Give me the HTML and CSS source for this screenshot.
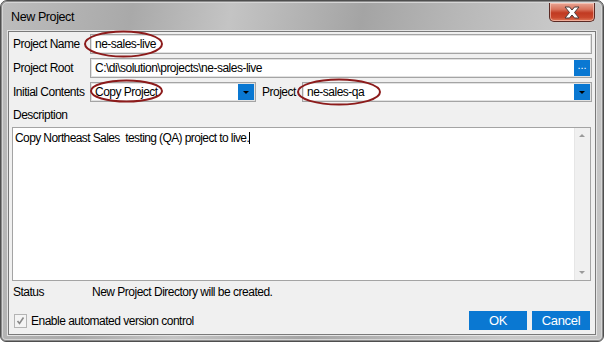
FILE: index.html
```html
<!DOCTYPE html>
<html>
<head>
<meta charset="utf-8">
<link rel="stylesheet" href="styles.css">
</head>
<body>
<div class="window">
  <div class="titlebar">
    <span class="title">New Project</span>
    <div class="close">
      <svg width="18" height="13" viewBox="0 0 18 13">
        <path d="M2 1 H6.5 L9 4 L11.5 1 H16 L11.5 6.5 L16 12 H11.5 L9 9 L6.5 12 H2 L6.5 6.5 Z" fill="#fff" stroke="#4a3a3a" stroke-width="1"/>
      </svg>
    </div>
  </div>
  <div class="client">
    <div class="row">
      <span class="lbl">Project Name</span>
      <div class="field">ne-sales-live</div>
    </div>
    <div class="row">
      <span class="lbl">Project Root</span>
      <div class="field"><span class="grow">C:\di\solution\projects\ne-sales-live</span><span class="browse">...</span></div>
    </div>
    <div class="row">
      <span class="lbl">Initial Contents</span>
      <div class="field combo1"><span class="grow">Copy Project</span><span class="drop"></span></div>
      <span class="lbl2">Project</span>
      <div class="field combo2"><span class="grow">ne-sales-qa</span><span class="drop"></span></div>
    </div>
    <div class="desc-label">Description</div>
    <div class="textarea">
      <div class="text">Copy Northeast Sales&nbsp; testing (QA) project to live.<span class="caret"></span></div>
      <div class="scrollbar">
        <span class="arr up"></span>
        <span class="arr down"></span>
      </div>
    </div>
    <div class="status">
      <span class="slbl">Status</span>
      <span>New Project Directory will be created.</span>
    </div>
    <div class="bottom">
      <div class="check">
        <span class="box">
          <svg width="11" height="11" viewBox="0 0 11 11"><path d="M2.5 6 L4.5 8.5 L8.5 2.5" fill="none" stroke="#8a8a8a" stroke-width="1.6"/></svg>
        </span>
        <span>Enable automated version control</span>
      </div>
      <div class="buttons">
        <div class="btn">OK</div>
        <div class="btn">Cancel</div>
      </div>
    </div>
  </div>
  <svg class="annot" width="604" height="342" viewBox="0 0 604 342">
    <ellipse cx="123.5" cy="44" rx="38.5" ry="12.5" fill="none" stroke="#8c1b1b" stroke-width="2"/>
    <ellipse cx="126.5" cy="91" rx="35.5" ry="10.5" fill="none" stroke="#8c1b1b" stroke-width="2"/>
    <ellipse cx="339" cy="92" rx="41" ry="12.5" fill="none" stroke="#8c1b1b" stroke-width="2"/>
  </svg>
</div>
</body>
</html>
```
FILE: styles.css
```css
* { box-sizing: border-box; }
html, body { margin: 0; padding: 0; background: #ffffff; }
body {
  font-family: "Liberation Sans", Arial, sans-serif;
  font-size: 12px;
  letter-spacing: -0.5px;
  color: #000;
}
.window {
  position: relative;
  width: 604px;
  height: 342px;
  border: 1px solid #4e4e4e;
  border-radius: 7px 7px 6px 6px;
  padding: 0 7px 6px 7px;
  background: linear-gradient(100deg, #bdbdbd 0%, #a9a9a9 20%, #c4c4c4 35%, #a4a4a4 55%, #b8b8b8 70%, #c9c9c9 85%, #c2c2c2 100%);
  box-shadow: inset 0 0 0 1px #8c8c8c, inset 0 0 0 2px #d6d6d6;
}
.titlebar {
  height: 30px;
  display: flex;
  align-items: flex-start;
  justify-content: space-between;
  position: relative;
}
.title {
  margin-top: 9px;
  margin-left: 3px;
  font-size: 12.5px;
  letter-spacing: -0.4px;
  color: #000;
}
.close {
  width: 46px;
  height: 19px;
  margin-top: 2px;
  margin-right: 1px;
  border: 1px solid #5a2a24;
  border-top: none;
  border-radius: 0 0 5px 5px;
  background: linear-gradient(#e9a594 0%, #d9735c 35%, #c13a22 55%, #c9472c 80%, #e07a5c 100%);
  box-shadow: inset 0 0 0 1px rgba(255,220,210,0.55);
  display: flex;
  align-items: center;
  justify-content: center;
}
.client {
  height: 304px;
  background: #f0f0f0;
  border: 1px solid #7a7a7a;
  box-shadow: 0 0 0 1px #e4e4e4;
  padding: 2px 3px 0 4px;
  display: flex;
  flex-direction: column;
}
.row {
  display: flex;
  align-items: center;
  height: 20px;
  margin-bottom: 4px;
}
.lbl { width: 77px; flex: none; }
.lbl2 { width: 40px; margin-left: 6px; flex: none; }
.field {
  flex: 1;
  height: 20px;
  background: #fff;
  border: 1px solid #a4a4a4;
  box-shadow: inset 0 0 0 1px #e2e2e2;
  display: flex;
  align-items: center;
  padding: 0 1px 0 4px;
}
.grow { flex: 1; }
.combo1 { flex: none; width: 166px; }
.browse, .drop {
  width: 16px;
  height: 16px;
  background: #0a78d2;
  flex: none;
  position: relative;
}
.browse {
  color: #fff;
  font-size: 11px;
  line-height: 11px;
  text-align: center;
  letter-spacing: 0;
}
.drop::after {
  content: "";
  position: absolute;
  left: 5px;
  top: 7px;
  border-left: 3px solid transparent;
  border-right: 3px solid transparent;
  border-top: 3px solid #000;
}
.desc-label {
  margin-top: 2px;
  height: 15px;
  line-height: 15px;
}
.textarea {
  margin-top: 4px;
  margin-left: -1px;
  width: 579px;
  height: 154px;
  background: #fff;
  border: 1px solid #a4a4a4;
  display: flex;
}
.text {
  flex: 1;
  padding: 3px 2px;
  line-height: 14px;
  letter-spacing: -0.6px;
}
.caret {
  display: inline-block;
  width: 1px;
  height: 12px;
  background: #000;
  vertical-align: -2px;
}
.scrollbar {
  width: 16px;
  background: #f0f0f0;
  border-left: 1px solid #e6e6e6;
  position: relative;
}
.arr {
  position: absolute;
  left: 4px;
  border-left: 3.5px solid transparent;
  border-right: 3.5px solid transparent;
}
.arr.up { top: 6px; border-bottom: 3.5px solid #9a9a9a; }
.arr.down { bottom: 6px; border-top: 3.5px solid #9a9a9a; }
.status {
  margin-top: 4px;
  height: 15px;
  line-height: 15px;
  display: flex;
}
.slbl { width: 79px; }
.bottom {
  margin-top: 11px;
  display: flex;
  justify-content: space-between;
  align-items: center;
  height: 19px;
}
.check {
  display: flex;
  align-items: center;
  margin-left: 1px;
}
.box {
  width: 13px;
  height: 14px;
  border: 1px solid #b4b4b4;
  background: #f4f4f4;
  margin-right: 4px;
  display: flex;
  align-items: center;
  justify-content: center;
}
.buttons {
  display: flex;
  gap: 5px;
  margin-right: 2px;
}
.btn {
  width: 58px;
  height: 19px;
  background: #0a78d2;
  color: #fff;
  font-size: 13px;
  letter-spacing: -0.3px;
  display: flex;
  align-items: center;
  justify-content: center;
}
.annot {
  position: absolute;
  left: -1px;
  top: -1px;
  pointer-events: none;
}
```
